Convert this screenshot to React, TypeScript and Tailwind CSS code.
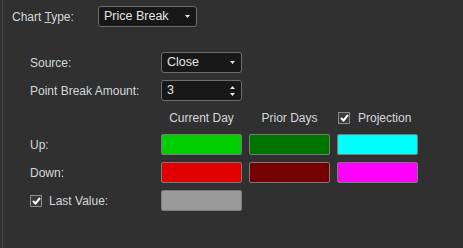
import React from "react";

const font = { fontFamily: '"Liberation Sans", Arial, sans-serif' };

function Caret() {
  return (
    <svg width="5" height="3" viewBox="0 0 5 3" className="shrink-0">
      <path d="M0 0 L5 0 L2.5 3 Z" fill="#e8e8e8" />
    </svg>
  );
}

function Select({ value, w }: { value: string; w: string }) {
  return (
    <div
      className={`${w} h-[21px] flex items-center justify-between pl-[5px] pr-[6px] bg-[#181818] border border-[#6e6e6e] rounded-[3px] text-[12.5px] text-[#e4e4e4]`}
    >
      <span>{value}</span>
      <Caret />
    </div>
  );
}

function Check() {
  return (
    <div className="w-[12px] h-[12px] border border-[#8a8a8a] bg-[#3a3a3a] flex items-center justify-center">
      <svg width="9" height="8" viewBox="0 0 9 8">
        <path d="M1 4 L3.5 6.5 L8 1" stroke="#ffffff" strokeWidth="2" fill="none" />
      </svg>
    </div>
  );
}

function Swatch({ color }: { color: string }) {
  return <div className={`h-[21px] rounded-[2px] border border-[#7a7a7a] ${color}`} />;
}

export default function App() {
  return (
    <div
      className="w-[463px] h-[248px] bg-[#303030] text-[#d4d8dc] text-[12px] overflow-hidden"
      style={font}
    >
      <div className="ml-[2px] h-full border-l border-[#444444]">
        <div className="flex items-center pt-[6px] pl-[9px]">
          <div className="w-[86px]">
            Chart <span className="underline">T</span>ype:
          </div>
          <Select value="Price Break" w="w-[99px]" />
        </div>

        <div className="mt-[25px] pl-[27px] grid grid-cols-[124px_81px_81px_81px] gap-x-[7px] gap-y-[7px] items-center">
          <div>Source:</div>
          <div className="col-span-3">
            <Select value="Close" w="w-[81px]" />
          </div>

          <div>Point Break Amount:</div>
          <div className="col-span-3">
            <div className="w-[81px] h-[21px] flex items-center justify-between pl-[5px] pr-[6px] bg-[#181818] border border-[#6e6e6e] rounded-[3px] text-[12.5px] text-[#e4e4e4]">
              <span>3</span>
              <div className="flex flex-col gap-[4px]">
                <svg width="5" height="3" viewBox="0 0 5 3">
                  <path d="M0 3 L5 3 L2.5 0 Z" fill="#e8e8e8" />
                </svg>
                <svg width="5" height="3" viewBox="0 0 5 3">
                  <path d="M0 0 L5 0 L2.5 3 Z" fill="#e8e8e8" />
                </svg>
              </div>
            </div>
          </div>

          <div className="h-[19px]" />
          <div className="text-center">Current Day</div>
          <div className="text-center">Prior Days</div>
          <div className="flex items-center gap-[8px] pl-[1px]">
            <Check />
            <span>Projection</span>
          </div>

          <div>Up:</div>
          <Swatch color="bg-[#00cc00]" />
          <Swatch color="bg-[#007400]" />
          <Swatch color="bg-[#00ffff]" />

          <div>Down:</div>
          <Swatch color="bg-[#e00000]" />
          <Swatch color="bg-[#740000]" />
          <Swatch color="bg-[#ff00ff]" />

          <div className="flex items-center gap-[7px]">
            <Check />
            <span>Last Value:</span>
          </div>
          <Swatch color="bg-[#9a9a9a]" />
        </div>
      </div>
    </div>
  );
}
